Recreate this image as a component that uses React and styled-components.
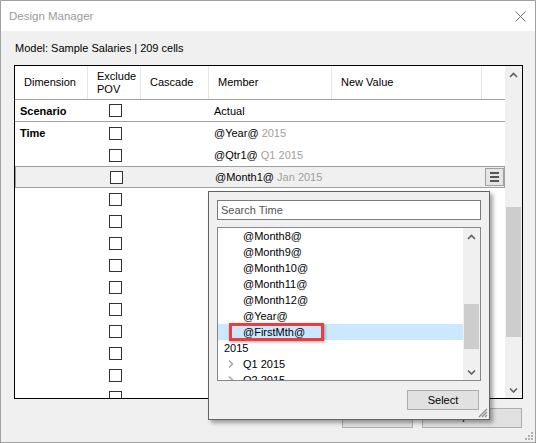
import React from 'react';
import styled, { createGlobalStyle } from 'styled-components';

const GlobalStyle = createGlobalStyle`
  html, body {
    margin: 0;
    padding: 0;
    background: #f0f0f0;
  }
  body {
    font-family: 'Liberation Sans', Arial, sans-serif;
    font-size: 11px;
    color: #000;
  }
`;

const Window = styled.div`
  position: relative;
  width: 536px;
  height: 443px;
  box-sizing: border-box;
  border: 1px solid #a0a0a0;
  background: #f0f0f0;
  display: flex;
  flex-direction: column;
  overflow: hidden;
`;

const TitleBar = styled.div`
  height: 30px;
  flex: none;
  background: #fff;
  color: #9a9a9a;
  font-size: 11.5px;
  display: flex;
  align-items: center;
  justify-content: space-between;
  padding: 0 9px 0 8px;
`;

const Body = styled.div`
  flex: 1;
  display: flex;
  flex-direction: column;
  padding: 0 12px 0 13px;
`;

const ModelLabel = styled.div`
  margin-top: 9px;
  height: 16px;
  line-height: 16px;
  padding-left: 1px;
`;

const Grid = styled.div`
  margin-top: 9px;
  width: 509px;
  height: 334px;
  box-sizing: border-box;
  border: 1px solid #000;
  background: #fff;
  display: flex;
`;

const Table = styled.div`
  flex: 1;
  display: flex;
  flex-direction: column;
  overflow: hidden;
`;

const columns = '73px 53px 68px 123px 150px 1fr';

const HeaderRow = styled.div`
  display: grid;
  grid-template-columns: ${columns};
  height: 34px;
  flex: none;
  box-sizing: border-box;
  border-bottom: 1px solid #a0a0a0;
`;

const HeaderCell = styled.div`
  display: flex;
  align-items: center;
  padding-left: 9px;
  line-height: 13px;
  border-right: ${(p) => (p.$last ? 'none' : '1px solid #e5e5e5')};
`;

const Row = styled.div`
  display: grid;
  grid-template-columns: ${columns};
  height: 22px;
  flex: none;
  box-sizing: border-box;
  align-items: center;
  background: ${(p) => (p.$selected ? '#f0f0f0' : '#fff')};
  border: ${(p) => (p.$selected ? '1px solid #a0a0a0' : 'none')};
  border-bottom: ${(p) =>
    p.$selected || p.$separator ? '1px solid #a0a0a0' : 'none'};
`;

const DimCell = styled.div`
  font-weight: bold;
  padding-left: ${(p) => (p.$selected ? '4px' : '5px')};
`;

const CheckCell = styled.div`
  display: flex;
  justify-content: center;
  padding-left: 2px;
`;

const CheckBox = styled.div`
  width: 13px;
  height: 13px;
  box-sizing: border-box;
  border: 1px solid #333;
  background: #fff;
`;

const MemberCell = styled.div`
  padding-left: 5px;
  white-space: nowrap;
`;

const Faded = styled.span`
  color: #a0a0a0;
`;

const ActionCell = styled.div`
  display: flex;
  justify-content: flex-end;
`;

const MenuButton = styled.div`
  width: 19px;
  height: 18px;
  box-sizing: border-box;
  border: 1px solid #a0a0a0;
  background: #e5e5e5;
  display: flex;
  flex-direction: column;
  align-items: center;
  justify-content: center;
  gap: 2px;
  span {
    display: block;
    width: 9px;
    height: 2px;
    background: #555;
  }
`;

const ScrollBar = styled.div`
  width: 17px;
  flex: none;
  background: #f0f0f0;
  display: flex;
  flex-direction: column;
`;

const ScrollArrow = styled.div`
  height: 17px;
  flex: none;
  display: flex;
  align-items: center;
  justify-content: center;
`;

const ScrollTrack = styled.div`
  flex: 1;
`;

const ScrollThumb = styled.div`
  margin: ${(p) => p.$top}px 1px 0;
  height: ${(p) => p.$height}px;
  background: #cdcdcd;
`;

const Footer = styled.div`
  margin-top: 9px;
  padding-right: 1px;
  display: flex;
  justify-content: flex-end;
  gap: 9px;
`;

const Button = styled.button`
  width: ${(p) => p.$width}px;
  height: 20px;
  box-sizing: border-box;
  border: 1px solid #adadad;
  background: #e1e1e1;
  font: inherit;
  color: #000;
  padding: 0 0 ${(p) => p.$lift || 0}px;
`;

const Popup = styled.div`
  position: absolute;
  left: 207px;
  top: 190px;
  width: 282px;
  height: 229px;
  box-sizing: border-box;
  border: 1px solid #646464;
  background: #f0f0f0;
  box-shadow: 3px 3px 4px rgba(0, 0, 0, 0.35);
  padding: 8px 8px 0 8px;
  display: flex;
  flex-direction: column;
`;

const SearchBox = styled.input`
  height: 20px;
  box-sizing: border-box;
  border: 1px solid #7a7a7a;
  background: #fff;
  padding: 0 0 0 3px;
  margin: 0;
  font: inherit;
  outline: none;
  &::placeholder {
    color: #555;
  }
`;

const Tree = styled.div`
  margin-top: 7px;
  height: 154px;
  box-sizing: border-box;
  border: 1px solid #828790;
  background: #fff;
  display: flex;
`;

const TreeList = styled.div`
  flex: 1;
  overflow: hidden;
`;

const TreeItem = styled.div`
  position: relative;
  height: 16px;
  line-height: 16px;
  display: flex;
  align-items: center;
  white-space: nowrap;
  padding-left: ${(p) => p.$indent}px;
  background: ${(p) => (p.$selected ? '#cce8ff' : 'transparent')};
`;

const Chevron = styled.svg`
  position: absolute;
  left: 10px;
  top: 4px;
`;

const Marker = styled.div`
  position: absolute;
  left: 11px;
  top: -1px;
  width: 95px;
  height: 18px;
  box-sizing: border-box;
  border: 3px solid #ea3d3f;
  box-shadow: 1px 1px 3px rgba(0, 0, 0, 0.35);
`;

const PopupFooter = styled.div`
  margin-top: 9px;
  display: flex;
  justify-content: flex-end;
  padding-right: 2px;
`;

const Grip = styled.svg`
  position: absolute;
  right: ${(p) => p.$offset}px;
  bottom: ${(p) => p.$offset}px;
`;

const Arrow = ({ down }) => (
  <svg width="9" height="6" viewBox="0 0 9 6">
    <polyline
      points={down ? '1,1.5 4.5,5 8,1.5' : '1,5 4.5,1.5 8,5'}
      fill="none"
      stroke="#606060"
      strokeWidth="1.6"
    />
  </svg>
);

const Scroller = ({ top, height }) => (
  <ScrollBar>
    <ScrollArrow>
      <Arrow />
    </ScrollArrow>
    <ScrollTrack>
      <ScrollThumb $top={top} $height={height} />
    </ScrollTrack>
    <ScrollArrow>
      <Arrow down />
    </ScrollArrow>
  </ScrollBar>
);

const rows = [
  { dim: 'Scenario', member: 'Actual', separator: true },
  { dim: 'Time', member: '@Year@', faded: '2015' },
  { member: '@Qtr1@', faded: 'Q1 2015' },
  { member: '@Month1@', faded: 'Jan 2015', selected: true },
  ...Array.from({ length: 10 }, () => ({})),
];

const treeItems = [
  { label: '@Month8@', indent: 25 },
  { label: '@Month9@', indent: 25 },
  { label: '@Month10@', indent: 25 },
  { label: '@Month11@', indent: 25 },
  { label: '@Month12@', indent: 25 },
  { label: '@Year@', indent: 25 },
  { label: '@FirstMth@', indent: 25, selected: true, marked: true },
  { label: '2015', indent: 6 },
  { label: 'Q1 2015', indent: 25, branch: true },
  { label: 'Q2 2015', indent: 25, branch: true },
];

export default function App() {
  return (
    <>
      <GlobalStyle />
      <Window>
        <TitleBar>
          <span>Design Manager</span>
          <svg width="11" height="11" viewBox="0 0 11 11">
            <path d="M0.5 0.5 L10.5 10.5 M10.5 0.5 L0.5 10.5" stroke="#707070" strokeWidth="1" />
          </svg>
        </TitleBar>
        <Body>
          <ModelLabel>Model: Sample Salaries | 209 cells</ModelLabel>
          <Grid>
            <Table>
              <HeaderRow>
                <HeaderCell>Dimension</HeaderCell>
                <HeaderCell>
                  Exclude
                  <br />
                  POV
                </HeaderCell>
                <HeaderCell>Cascade</HeaderCell>
                <HeaderCell>Member</HeaderCell>
                <HeaderCell>New Value</HeaderCell>
                <HeaderCell $last />
              </HeaderRow>
              {rows.map((r, i) => (
                <Row key={i} $selected={r.selected} $separator={r.separator}>
                  <DimCell $selected={r.selected}>{r.dim}</DimCell>
                  <CheckCell>
                    <CheckBox />
                  </CheckCell>
                  <div />
                  <MemberCell>
                    {r.member}
                    {r.faded && <Faded> {r.faded}</Faded>}
                  </MemberCell>
                  <div />
                  <ActionCell>
                    {r.selected && (
                      <MenuButton>
                        <span />
                        <span />
                        <span />
                      </MenuButton>
                    )}
                  </ActionCell>
                </Row>
              ))}
            </Table>
            <Scroller top={124} height={130} />
          </Grid>
          <Footer>
            <Button $width={71} $lift={5}>OK</Button>
            <Button $width={100} $lift={5}>Update</Button>
          </Footer>
        </Body>

        <Popup>
          <SearchBox placeholder="Search Time" readOnly />
          <Tree>
            <TreeList>
              {treeItems.map((t) => (
                <TreeItem key={t.label} $indent={t.indent} $selected={t.selected}>
                  {t.branch && (
                    <Chevron width="6" height="8" viewBox="0 0 6 8">
                      <polyline points="1,0.5 4.5,4 1,7.5" fill="none" stroke="#a6a6a6" strokeWidth="1.5" />
                    </Chevron>
                  )}
                  {t.label}
                  {t.marked && <Marker />}
                </TreeItem>
              ))}
            </TreeList>
            <Scroller top={59} height={45} />
          </Tree>
          <PopupFooter>
            <Button $width={72}>Select</Button>
          </PopupFooter>
          <Grip $offset={1} width="12" height="12" viewBox="0 0 12 12">
            <path d="M11 3 L3 11 M11 6 L6 11 M11 9 L9 11" stroke="#8a8a8a" strokeWidth="1.2" />
          </Grip>
        </Popup>

        <Grip $offset={2} width="9" height="9" viewBox="0 0 9 9">
          <g fill="#b0b0b0">
            <rect x="7" y="1" width="2" height="2" />
            <rect x="4" y="4" width="2" height="2" />
            <rect x="7" y="4" width="2" height="2" />
            <rect x="1" y="7" width="2" height="2" />
            <rect x="4" y="7" width="2" height="2" />
            <rect x="7" y="7" width="2" height="2" />
          </g>
        </Grip>
      </Window>
    </>
  );
}
